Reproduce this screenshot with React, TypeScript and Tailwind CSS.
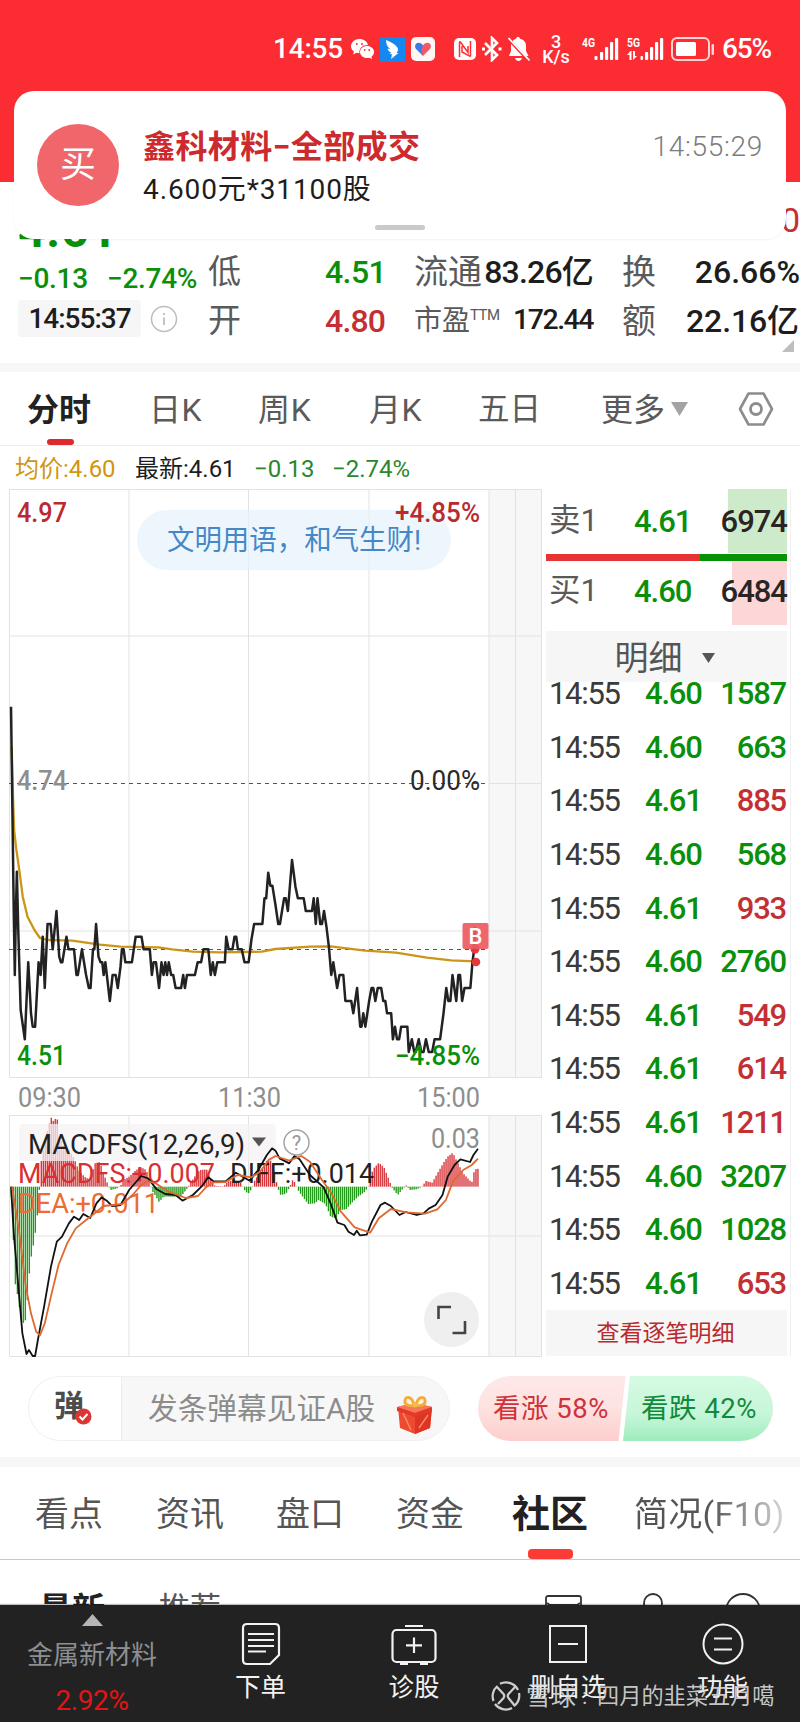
import React from "react";

const GREEN = "text-[#0a8f0a]";
const RED = "text-[#c42f33]";

const PRICE =
  "32,-220 40,400 43,585 46,400 49,275 53,450 60,690 72,778 82,547 90,700 95,740 102,740 112,547 118,585 124,470 130,624 138,432 147,432 153,508 164,393 172,530 177,547 181,547 193,470 199,508 215,508 222,585 226,585 238,508 250,585 258,624 263,624 270,508 274,508 279,432 286,530 292,547 297,547 301,585 306,547 319,663 327,585 336,585 342,624 350,560 354,508 359,508 364,547 383,547 394,470 411,470 417,508 435,508 441,585 446,547 453,547 462,624 469,547 475,585 480,547 485,585 490,547 497,585 503,585 510,624 526,624 532,585 537,624 543,585 566,585 574,547 584,547 591,508 605,508 612,585 618,547 624,585 631,547 653,547 657,470 664,508 675,508 681,470 686,470 691,508 702,508 710,547 722,547 730,480 738,432 762,432 768,355 773,355 779,278 785,317 791,317 800,375 808,432 813,432 819,393 825,355 830,355 836,393 848,240 858,320 865,355 882,355 888,393 906,393 911,355 917,432 922,355 930,432 935,432 941,393 948,440 955,500 962,585 968,547 979,624 986,585 997,585 1003,663 1020,663 1026,700 1037,624 1046,740 1050,740 1055,700 1061,740 1072,663 1079,624 1084,624 1090,663 1097,624 1107,624 1113,663 1119,663 1124,700 1136,700 1141,778 1147,740 1153,778 1159,778 1165,740 1183,740 1187,816 1196,778 1203,816 1207,816 1216,778 1223,816 1230,816 1237,778 1245,816 1255,816 1262,778 1278,778 1288,700 1296,624 1302,663 1308,663 1314,585 1325,663 1331,585 1336,585 1342,663 1349,624 1366,624 1372,547 1377,508 1380,440";

const AVERAGE =
  "34,-100 38,60 41,150 47,205 56,270 66,350 80,410 100,450 116,474 140,480 210,482 250,488 290,494 350,500 460,502 500,508 560,515 640,517 760,515 800,507 900,500 960,499 1060,512 1150,518 1240,533 1310,541 1380,544";

const DIFF =
  "32,320 40,460 55,640 65,760 77,822 84,810 95,828 102,828 110,780 128,680 148,560 165,485 180,470 200,430 215,410 230,420 242,402 262,414 280,370 295,352 310,362 325,378 350,375 375,330 410,288 430,295 455,328 480,342 510,345 530,362 560,345 585,320 605,292 620,304 655,304 685,278 725,302 750,270 775,225 790,205 800,212 812,235 840,250 855,228 870,238 900,285 940,322 960,370 980,428 1000,435 1012,455 1028,465 1036,452 1045,466 1065,464 1080,425 1105,375 1118,368 1135,378 1160,405 1178,396 1210,405 1230,400 1245,386 1265,375 1285,345 1300,290 1320,255 1337,238 1365,246 1375,225 1388,206";

const DEA =
  "35,320 55,450 75,620 90,700 105,755 116,766 130,730 150,640 170,555 195,490 220,445 250,420 275,400 300,378 330,375 355,372 385,345 410,315 430,303 455,312 490,335 540,354 575,348 600,320 620,307 655,306 690,285 730,292 755,275 780,240 800,228 840,242 875,228 900,245 935,300 960,335 990,395 1030,442 1075,458 1100,415 1135,387 1180,397 1235,401 1270,388 1295,360 1315,305 1345,270 1370,255 1388,236";

const HIST: [number, number][] = [
  [32, 330], [38, 460], [44, 610], [50, 640], [56, 680], [62, 720], [72, 735], [78, 680], [84, 590], [92, 520], [100, 480], [108, 410],
  [113, 340], [117, 300], [120, 240], [126, 210], [138, 150], [148, 112], [156, 125], [165, 108], [172, 170], [185, 200], [200, 210], [215, 235],
  [228, 270], [245, 290], [262, 300], [275, 250], [290, 246], [300, 280], [312, 310], [316, 321], [322, 330], [340, 325], [350, 318],
  [358, 300], [375, 290], [395, 270], [410, 262], [425, 270], [436, 310], [440, 330], [450, 345], [462, 366], [475, 350], [500, 350],
  [525, 350], [540, 330], [548, 318], [565, 290], [580, 270], [600, 268], [612, 300], [625, 318], [650, 319], [660, 305], [680, 300],
  [700, 308], [706, 325], [720, 342], [732, 325], [740, 300], [760, 270], [775, 240], [785, 230], [800, 285], [805, 320], [815, 345],
  [830, 342], [842, 320], [848, 300], [858, 308], [862, 325], [875, 345], [895, 372], [915, 370], [925, 360], [945, 372], [960, 410],
  [975, 415], [990, 390], [1005, 388], [1020, 370], [1040, 350], [1060, 335], [1070, 318], [1075, 290], [1085, 265], [1100, 248],
  [1115, 262], [1130, 300], [1138, 322], [1155, 345], [1170, 326], [1180, 316], [1190, 330], [1210, 328], [1225, 320], [1237, 303],
  [1255, 308], [1270, 280], [1290, 245], [1300, 230], [1315, 218], [1325, 240], [1345, 280], [1370, 308], [1378, 268], [1391, 266],
];

function histAt(x: number) {
  for (let i = 1; i < HIST.length; i++) {
    const [x0, y0] = HIST[i - 1];
    const [x1, y1] = HIST[i];
    if (x <= x1) return y0 + ((y1 - y0) * (x - x0)) / (x1 - x0);
  }
  return 320;
}

const BARS = Array.from({ length: 235 }, (_, i) => {
  const x = 33 + i * 5.79;
  return { x, y: histAt(x) };
});

function Label({ x, y, w, fill, children, size = 27, weight = 400 }: { x: number; y: number; w: number; fill: string; children: string; size?: number; weight?: number }) {
  return (
    <text x={x} y={y} fontSize={size} fontWeight={weight} fill={fill} textLength={w} lengthAdjust="spacingAndGlyphs">
      {children}
    </text>
  );
}

function Chart() {
  return (
    <svg width="542" height="869" viewBox="0 489 542 869" className="block shrink-0">
      <rect x="489" y="489" width="53" height="588" fill="#f7f7f7" />
      <rect x="489" y="1115" width="53" height="241" fill="#f7f7f7" />
      <g stroke="#e2e2e2" strokeWidth="1" fill="none">
        <path d="M9.5 489.5H542M9.5 636H542M489 783.5H542M9.5 931H542M9.5 1077.5H542M9.5 489V1077M129 489V1077M248.5 489V1077M369 489V1077M489 489V1077M515.5 489V1077M541.5 489V1077" />
        <path d="M9.5 1115.5H542M9.5 1236H542M9.5 1356.5H542M9.5 1115V1356M129 1115V1356M248.5 1115V1356M369 1115V1356M489 1115V1356M515.5 1115V1356M541.5 1115V1356" />
      </g>
      <rect x="137" y="510" width="314" height="60" rx="30" fill="#e6f1fc" fillOpacity="0.68" />
      <path d="M9 783.5H489M9 949.5H489" stroke="#555" strokeWidth="1" strokeDasharray="4 4" />
      <Label x={17} y={522} w={50} fill="#b92a2f" weight={500}>4.97</Label>
      <Label x={395} y={522} w={85} fill="#b92a2f" weight={500}>+4.85%</Label>
      <Label x={167} y={550} w={254} fill="#4488c8" size={28}>文明用语，和气生财!</Label>
      <Label x={17} y={790} w={50} fill="#8e8e8e" weight={500}>4.74</Label>
      <Label x={410} y={790} w={70} fill="#2a2a2a">0.00%</Label>

      <g transform="translate(0 780) scale(0.34435 0.33333)" fill="none" strokeLinejoin="round">
        <polyline points={AVERAGE} stroke="#cb9518" strokeWidth="2.3" vectorEffect="non-scaling-stroke" />
        <polyline points={PRICE} stroke="#222" strokeWidth="2.5" vectorEffect="non-scaling-stroke" />
      </g>
      <circle cx="476" cy="962" r="4.300" fill="#e5393f" />
      <circle cx="475" cy="949" r="4.500" fill="#e5393f" />
      <rect x="462.500" y="923" width="26" height="26" rx="2" fill="#ec5a60" fillOpacity="0.92" />
      <text x="475.500" y="944" fontSize="22" fontWeight="500" fill="#fff" textAnchor="middle">B</text>
      <Label x={17} y={1065} w={49} fill="#0a8f0a" weight={500}>4.51</Label>
      <Label x={395} y={1065} w={85} fill="#0a8f0a" weight={500}>−4.85%</Label>

      <Label x={18} y={1107} w={63} fill="#8e8e8e">09:30</Label>
      <Label x={218} y={1107} w={63} fill="#8e8e8e">11:30</Label>
      <Label x={417} y={1107} w={63} fill="#8e8e8e">15:00</Label>

      <g transform="translate(0 1080) scale(0.34435 0.33333)">
        {BARS.map((b, i) => (
          <rect
            key={i}
            x={b.x - 1.9}
            y={Math.min(320, b.y)}
            width={4}
            height={Math.max(1, Math.abs(b.y - 320))}
            fill={b.y > 320 ? "#24991c" : "#d63438"}
          />
        ))}
      </g>
      <rect x="19" y="1124" width="257" height="37" rx="4" fill="#f5f1f4" fillOpacity="0.75" />
      <Label x={28} y={1154} w={217} fill="#222" size={27.5}>MACDFS(12,26,9)</Label>
      <path d="M252 1137.500H266L259 1146.500Z" fill="#555" />
      <Label x={431} y={1148} w={49} fill="#8e8e8e">0.03</Label>
      <Label x={18} y={1183} w={197} fill="#d92f33" size={28}>MACDFS:+0.007</Label>
      <Label x={230} y={1183} w={144} fill="#222" size={28}>DIFF:+0.014</Label>
      <Label x={18} y={1213} w={141} fill="#ec6c33" size={28}>DEA:+0.011</Label>
      <g transform="translate(0 1080) scale(0.34435 0.33333)" fill="none" strokeLinejoin="round">
        <polyline points={DIFF} stroke="#111" strokeWidth="1.8" vectorEffect="non-scaling-stroke" />
        <polyline points={DEA} stroke="#e0682f" strokeWidth="1.8" vectorEffect="non-scaling-stroke" />
      </g>
      <circle cx="296.500" cy="1142.500" r="12.500" fill="#fff" fillOpacity="0.6" stroke="#a2a2a2" strokeWidth="1.500" />
      <text x="296.500" y="1149.500" fontSize="20" fill="#999" textAnchor="middle">?</text>
      <circle cx="451.500" cy="1319.500" r="27.500" fill="#efefef" />
      <path d="M438.500 1319V1307H451M452.500 1333H465V1321" fill="none" stroke="#444" strokeWidth="2.600" />
    </svg>
  );
}

const TRADES: [string, string, string][] = [
  ["4.60", "1587", "g"],
  ["4.60", "663", "g"],
  ["4.61", "885", "r"],
  ["4.60", "568", "g"],
  ["4.61", "933", "r"],
  ["4.60", "2760", "g"],
  ["4.61", "549", "r"],
  ["4.61", "614", "r"],
  ["4.61", "1211", "r"],
  ["4.60", "3207", "g"],
  ["4.60", "1028", "g"],
  ["4.61", "653", "r"],
];

function OrderPanel() {
  return (
    <div className="ml-[2px] flex h-[868px] w-[247px] flex-col border-r border-[#f0f0f0] pr-[3px] pl-[2px]">
      <div className="flex h-16 items-center pl-[3px] text-[31px]">
        <span className="w-[85px] text-[31.500px] text-[#5a5a5a]">卖1</span>
        <span className={`${GREEN} flex-1 font-medium tracking-[-1px]`}>4.61</span>
        <span className="flex h-16 w-[59px] items-center justify-end bg-[#cdebcb] font-medium tracking-[-1px] text-[#2a2422]">6974</span>
      </div>
      <div className="mt-[1px] flex h-[7px]">
        <div className="h-full w-[154px] bg-[#e63435]" />
        <div className="h-full flex-1 bg-[#059205]" />
      </div>
      <div className="flex h-16 items-center pl-[3px] text-[31px]">
        <span className="w-[85px] pb-1 text-[31.500px] text-[#5a5a5a]">买1</span>
        <span className={`${GREEN} flex-1 pb-1 font-medium tracking-[-1px]`}>4.60</span>
        <span className="flex h-16 w-[55px] items-center justify-end bg-[#fdd6d8] pb-1 font-medium tracking-[-1px] text-[#2a2422]">6484</span>
      </div>
      <div className="mt-[6px] flex h-[51px] shrink-0 items-center justify-center gap-[19px] bg-[#f6f6f6] pt-[2px] pr-[4px] text-[34px] text-[#555]">
        <span>明细</span>
        <svg width="13" height="10" viewBox="0 0 13 10"><path d="M0 0H13L6.500 10Z" fill="#555" /></svg>
      </div>
      <div className="h-[628px] shrink-0 overflow-hidden">
        <div className="-mt-[15px]">
          {TRADES.map(([price, qty, side], i) => (
            <div key={i} className="flex h-[53.600px] items-center pr-[1px] pl-[3px] text-[31px] font-medium">
              <span className="w-[96px] font-normal tracking-[-1.300px] text-[#3a3a3a]">14:55</span>
              <span className={`${GREEN} tracking-[-1.200px]`}>{price}</span>
              <span className={`${side === "g" ? GREEN : RED} ml-auto tracking-[-1.200px]`}>{qty}</span>
            </div>
          ))}
        </div>
      </div>
      <div className="flex h-[46px] shrink-0 items-center justify-center bg-[#f6f6f6] pr-[2px] text-[23px] text-[#b92a2f]">查看逐笔明细</div>
    </div>
  );
}

function Signal({ tag, data }: { tag: string; data?: boolean }) {
  return (
    <svg width="37" height="28" viewBox="0 0 37 28">
      <text x="0" y="12" fontSize="12" fontWeight="700" fill="#fff" textLength="13" lengthAdjust="spacingAndGlyphs">{tag}</text>
      <g fill="#fff">
        {!data && <rect x="12.500" y="21" width="3" height="4" rx="1" />}
        {data && <path d="M3.500 16L0 20H2.500V25H4.500V16ZM6 16V25L10 21H8V16Z" />}
        {data && <rect x="13.500" y="21" width="2.500" height="4" rx="1" />}
        <rect x="18" y="17" width="3.200" height="8" rx="1" />
        <rect x="23" y="12" width="3.200" height="13" rx="1" />
        <rect x="28" y="7" width="3.200" height="18" rx="1" />
        <rect x="33" y="3" width="3.200" height="22" rx="1" />
      </g>
    </svg>
  );
}

function StatusBar() {
  return (
    <div className="flex h-[98px] items-center pl-[273px] text-[28px] text-white">
      <span className="w-[78px] font-medium tracking-[-0.2px]">14:55</span>
      <svg width="23" height="20" viewBox="0 0 23 20" className="shrink-0">
        <path d="M8.500 0C3.800 0 0 3.200 0 7.200c0 2.200 1.200 4.100 3 5.400l-.8 2.800 3.200-1.600c1 .3 2 .4 3 .4C7.800 9 12 5.700 17 6 16.300 2.500 12.700 0 8.500 0Z" fill="#fff" />
        <path d="M23 13c0-3.500-3.200-6-7-6s-7 2.600-7 6c0 3.300 3.200 6 7 6 .8 0 1.600-.1 2.300-.3l2.700 1.300-.6-2.300C22 16.600 23 15 23 13Z" fill="#fff" />
        <g fill="#fb2d33"><circle cx="5.800" cy="5" r="1" /><circle cx="11" cy="5" r="1" /><circle cx="13.700" cy="11" r=".9" /><circle cx="18.200" cy="11" r=".9" /></g>
      </svg>
      <svg width="25" height="25" viewBox="0 0 25 25" className="ml-[6px] shrink-0">
        <rect width="25" height="25" fill="#1787f0" />
        <path d="M6 3c5 2 11 5 12 9 .2 1.500-.7 3-1.500 4h2L11 22l1-4.500-2.500-1 2-.7C8.500 14.500 8 13 7.500 11.500l3 .8C7 9.500 6 6.500 6 3Z" fill="#fff" />
      </svg>
      <svg width="24" height="24" viewBox="0 0 24 24" className="ml-[6px] shrink-0">
        <rect width="24" height="24" rx="5" fill="#fff6f6" />
        <path d="M12 19 5.500 12.500C3 10 4 6 7.500 5.800c2 0 3.500 1 4.500 2.700Z" fill="#3b7be8" />
        <path d="M12 19l6.500-6.500C21 10 20 6 16.500 5.800c-2 0-3.500 1-4.500 2.700-2 3.500-2 7 0 10.500Z" fill="#ee5a66" />
      </svg>
      <svg width="22" height="24" viewBox="0 0 22 24" className="ml-[19px] shrink-0">
        <rect y="1" width="22" height="22" rx="5" fill="#fff" />
        <path d="M5.500 20V5.500Q5.500 4 6.800 5.500L14 15.500V9M8 9V15L15.200 18.800Q16.500 20 16.500 18.500V4" fill="none" stroke="#fb2d33" strokeWidth="1.500" />
      </svg>
      <svg width="20" height="26" viewBox="0 0 20 26" className="ml-[6px] shrink-0" fill="none" stroke="#fff" strokeWidth="2.600">
        <path d="M3 7l12 12-5 5V2l5 5L3 19" />
        <path d="M0 13h3M16.500 13h3" strokeWidth="2.800" />
      </svg>
      <svg width="23" height="26" viewBox="0 0 23 26" className="ml-[5px] shrink-0">
        <path d="M11 1c1 0 1.800.7 2 1.700 4 .8 6 3.800 6 7.300v5l2.500 5H2l2-5v-5c0-3.500 2-6.500 5-7.300C9.200 1.700 10 1 11 1ZM8 22h7c-.5 2-2 3-3.500 3S8.500 24 8 22Z" fill="#fff" />
        <path d="M0 1.500 21 24" stroke="#fb2d33" strokeWidth="3" />
        <path d="M1.500 2 22.500 24.500" stroke="#fff" strokeWidth="1.800" />
      </svg>
      <div className="ml-[11px] flex w-[30px] flex-col items-center text-[18px] leading-[15px] font-medium">
        <span>3</span>
        <span>K/s</span>
      </div>
      <div className="ml-[11px]"><Signal tag="4G" /></div>
      <div className="ml-[8px]"><Signal tag="5G" data /></div>
      <svg width="45" height="25" viewBox="0 0 45 25" className="ml-[7px] shrink-0">
        <rect x="1" y="1" width="37" height="22" rx="5" fill="none" stroke="#ffd5d5" strokeWidth="2" />
        <rect x="5" y="5" width="20" height="14" rx="1.500" fill="#fff" />
        <rect x="40.500" y="7" width="2.500" height="11" rx="1" fill="#ffd5d5" />
      </svg>
      <span className="ml-[6px] font-medium tracking-[-1.200px]">65%</span>
    </div>
  );
}

function TradeToast() {
  return (
    <div className="absolute top-[91px] left-[14px] flex h-[148px] w-[772px] flex-col rounded-[20px] bg-white shadow-[0_1px_2px_rgba(0,0,0,0.05)]">
      <div className="flex flex-1 pt-[33px] pr-[23px] pl-[23px]">
        <div className="flex size-[82px] shrink-0 items-center justify-center rounded-full bg-[#f1666a] text-[36px] text-white">买</div>
        <div className="ml-[24px] flex flex-col pt-[7px]">
          <span className="text-[32px] font-bold tracking-[0.4px] text-[#cc2a2e]">鑫科材料−全部成交</span>
          <span className="mt-[13px] text-[28px] tracking-[0.9px] text-[#1d1d1d]">4.600元*31100股</span>
        </div>
        <span className="mt-[9px] ml-auto text-[28px] font-light tracking-[0.7px] text-[#7c7c7c]">14:55:29</span>
      </div>
      <div className="mb-[9px] h-[5px] w-[50px] self-center rounded-full bg-[#c9c9c9]" />
    </div>
  );
}

const QUOTE_ROW = "grid h-[49px] grid-cols-[117px_89px_179px_29px_178px] items-center text-[32px] whitespace-nowrap";

function Quote() {
  return (
    <div className="flex h-[181px] overflow-hidden pt-[16px]">
      <div className="flex w-[208px] shrink-0 flex-col pl-[18px]">
        <span className={`${GREEN} mt-[9px] text-[48px] font-bold tracking-[0.800px]`}>4.61</span>
        <div className={`${GREEN} mt-[10px] flex text-[28px] font-medium tracking-[-0.3px]`}>
          <span className="w-[89px]">−0.13</span>
          <span>−2.74%</span>
        </div>
        <div className="mt-[7px] flex items-center">
          <span className="flex h-[37px] w-[123px] items-center justify-center rounded-[4px] bg-[#f6f6f6] text-[28px] font-medium tracking-[-1px] text-[#1d1d1d]">14:55:37</span>
          <svg width="28" height="28" viewBox="0 0 28 28" className="ml-[9px]">
            <circle cx="14" cy="14" r="12.500" fill="none" stroke="#bdbdbd" strokeWidth="1.500" />
            <path d="M14 12.500V20M14 8V10" stroke="#bdbdbd" strokeWidth="1.800" />
          </svg>
        </div>
      </div>
      <div className="w-[592px] shrink-0 text-[#1d1d1d]">
        <div className={QUOTE_ROW}>
          <span className={`${RED} relative -top-[3px] col-span-5 text-right text-[34px]`}>0</span>
        </div>
        <div className={QUOTE_ROW}>
          <span className="text-[33px] text-[#5a5a5a]">低</span>
          <span className={`${GREEN} font-medium tracking-[-0.6px]`}>4.51</span>
          <span className="flex items-center justify-between"><span className="text-[34px] text-[#5a5a5a]">流通</span><span className="font-medium tracking-[-0.8px]">83.26亿</span></span>
          <span />
          <span className="flex items-center justify-between"><span className="text-[34px] text-[#5a5a5a]">换</span><span className="font-medium">26.66%</span></span>
        </div>
        <div className={QUOTE_ROW}>
          <span className="text-[33px] text-[#5a5a5a]">开</span>
          <span className={`${RED} font-medium tracking-[-0.8px]`}>4.80</span>
          <span className="flex items-center justify-between"><span className="flex text-[28px] text-[#5a5a5a]">市盈<span className="pt-[1px] text-[15px] tracking-[-0.5px]">TTM</span></span><span className="text-[28.500px] font-medium tracking-[-1.500px]">172.44</span></span>
          <span />
          <span className="flex items-center justify-between pr-[1px]"><span className="text-[34px] text-[#5a5a5a]">额</span><span className="font-medium tracking-[-0.1px]">22.16亿</span></span>
        </div>
        <svg width="12" height="12" viewBox="0 0 12 12" className="-mt-[5px] ml-[574px]"><path d="M12 0V12H0Z" fill="#bdbdbd" /></svg>
      </div>
    </div>
  );
}

function PeriodTabs() {
  return (
    <div className="flex h-[74px] border-b border-[#ececec] pl-[27px] text-[32px] text-[#5a5a5a]">
      <div className="flex w-[122px] flex-col pt-[22px]">
        <span className="font-bold text-[#222]">分时</span>
        <span className="mt-[13px] ml-[20px] h-[7px] w-[27px] rounded-full bg-[#dc2b2f]" />
      </div>
      <span className="w-[109px] pt-[22px] tracking-[0.5px]">日K</span>
      <span className="w-[111px] pt-[22px] tracking-[0.8px]">周K</span>
      <span className="w-[109px] pt-[22px] tracking-[0.5px]">月K</span>
      <span className="w-[123px] pt-[22px] text-[31.500px]">五日</span>
      <span className="flex w-[137px] pt-[22px]">
        更多
        <svg width="17" height="14" viewBox="0 0 17 14" className="mt-[8px] ml-[6px]"><path d="M0 0H17L8.500 14Z" fill="#a3a3a3" /></svg>
      </span>
      <svg width="36" height="34" viewBox="0 0 36 34" className="mt-[20px]" fill="none" stroke="#8c8c8c">
        <path d="M10.500 1.500H25.500L34 17 25.500 32.500H10.500L2 17Z" strokeWidth="2.600" strokeLinejoin="round" />
        <circle cx="18" cy="17" r="5.500" strokeWidth="2.800" />
      </svg>
    </div>
  );
}

function Gift() {
  return (
    <svg width="36" height="40" viewBox="0 0 36 40">
      <path d="M1 12 18 8 35 12 33 33 18 39 3 33Z" fill="#ee4a32" />
      <path d="M18 18V39L33 33 35 13Z" fill="#dd3424" />
      <path d="M0 12 17 7.500 35 12 18 18Z" fill="#f8765a" />
      <path d="M0 12 18 18 35 12V16L18 22 0 16Z" fill="#e23a28" />
      <path d="M22 33 31 20M6 18 14 35" stroke="#f98a63" strokeWidth="1.500" />
      <path d="M17 10C11 12 7 9 8 5s7-4 9 5ZM19 10c6 2 10-1 9-5s-7-4-9 5Z" fill="#fff3cf" stroke="#f3ac3c" strokeWidth="2.800" />
      <circle cx="18" cy="10" r="2.500" fill="#f7bb4c" />
    </svg>
  );
}

function Barrage() {
  return (
    <div className="flex h-[99px] items-start pt-[18px] pl-[28px]">
      <div className="flex h-[65px] w-[422px] overflow-hidden rounded-full border border-[#f0f0f0] bg-[#f7f7f7]">
        <div className="relative flex w-[93px] items-center border-r border-[#ebebeb] bg-white pb-1.5 pl-[25px] text-[30px] font-bold text-[#4c4c4c]">
          弹
          <svg width="17" height="17" viewBox="0 0 17 17" className="absolute top-[31px] left-[46px]">
            <circle cx="8.500" cy="8.500" r="8" fill="#de3533" />
            <path d="M4.500 8.500 7.500 11.500 12.500 6" fill="none" stroke="#fff" strokeWidth="2" />
          </svg>
        </div>
        <span className="flex w-[275px] items-center pt-[1px] pl-[26px] text-[29.700px] text-[#8c8c8c]">发条弹幕见证A股</span>
        <div className="pt-[18px]"><Gift /></div>
      </div>
      <div className="relative ml-[28px] flex h-[65px] w-[295px] overflow-hidden rounded-full bg-linear-to-b from-[#fde9e9] via-[#fde2e1] to-[#fccecb]">
        <svg width="156" height="65" viewBox="0 0 156 65" className="absolute top-0 right-0">
          <defs>
            <linearGradient id="fall" x1="0" y1="0" x2="0" y2="1">
              <stop offset="0" stopColor="#d5fae3" />
              <stop offset="0.6" stopColor="#c6f6d9" />
              <stop offset="1" stopColor="#9eecbd" />
            </linearGradient>
          </defs>
          <path d="M8.500 0H156V65H1.500Z" fill="#fff" />
          <path d="M13 0H156V65H6Z" fill="url(#fall)" />
        </svg>
        <span className="relative flex w-[147px] items-center pl-[15px] text-[27.500px] tracking-[0.5px] whitespace-nowrap text-[#cf3238]">看涨 58%</span>
        <span className="relative flex items-center pl-[16px] text-[27.500px] tracking-[0.5px] whitespace-nowrap text-[#128a3c]">看跌 42%</span>
      </div>
    </div>
  );
}

function SectionTabs() {
  return (
    <div className="flex h-[93px] border-b border-[#c8c8c8] pl-[35px] text-[34px] whitespace-nowrap text-[#555]">
      <span className="w-[121px] pt-[30px]">看点</span>
      <span className="w-[120px] pt-[30px]">资讯</span>
      <span className="w-[120px] pt-[30px]">盘口</span>
      <span className="w-[116px] pt-[30px]">资金</span>
      <div className="flex w-[122px] flex-col pt-[28px]">
        <span className="text-[38px] font-bold text-[#222]">社区</span>
        <span className="mt-[16px] ml-[16px] h-[10px] w-[45px] rounded-[4px] bg-[#fb3b35]" />
      </div>
      <span className="h-[80px] bg-linear-to-r from-[#555] from-50% to-[#d8d8d8] bg-clip-text pt-[30px] tracking-[0.3px] text-transparent">简况(F10)</span>
    </div>
  );
}

function FeedTabs() {
  return (
    <div className="flex h-[45px] items-start overflow-hidden pt-[33px] pl-[39px] text-[33px]">
      <span className="w-[120px] font-bold text-[#222]">最新</span>
      <span className="w-[386px] text-[31px] text-[#555]">推荐</span>
      <svg width="38" height="20" viewBox="0 0 38 20" className="mt-[2px]" fill="none" stroke="#333" strokeWidth="1.800">
        <rect x="1" y="1" width="35" height="22" rx="2" />
        <path d="M2 8 5 10H32L35 8" />
      </svg>
      <svg width="20" height="20" viewBox="0 0 20 20" className="ml-[60px]" fill="none" stroke="#333" strokeWidth="1.800">
        <circle cx="10" cy="10" r="9" />
      </svg>
      <svg width="36" height="30" viewBox="0 0 36 30" className="ml-[62px]" fill="none" stroke="#333" strokeWidth="1.800">
        <circle cx="18" cy="18" r="17" />
      </svg>
    </div>
  );
}

const NAV = "flex flex-col items-center pr-[1px] text-[25.500px]";

function BottomNav() {
  return (
    <div className="relative flex h-[117px] bg-[#222] text-[#f2f2f2] shadow-[0_-1px_1px_rgba(0,0,0,0.25)]">
      <div className="flex w-[184px] flex-col items-center pt-[9px]">
        <svg width="21" height="12" viewBox="0 0 21 12"><path d="M10.500 0 21 12H0Z" fill="#b5b5b5" /></svg>
        <span className="mt-[16px] text-[26px] text-[#8d8f93]">金属新材料</span>
        <span className="mt-[19px] text-[28px] tracking-[-0.4px] text-[#e21512]">2.92%</span>
      </div>
      <div className={`${NAV} w-[154px]`}>
        <svg width="40" height="44" viewBox="0 0 40 44" className="mt-[17px]" fill="none" stroke="#f2f2f2" strokeWidth="2.200">
          <path d="M6 2H34Q38 2 38 6V33L29 42H6Q2 42 2 38V6Q2 2 6 2Z" />
          <path d="M7 12H33M7 18H33M7 24H33M7 29.500H25" />
        </svg>
        <span className="mt-[9px]">下单</span>
      </div>
      <div className={`${NAV} w-[153px]`}>
        <svg width="46" height="44" viewBox="0 0 46 44" className="mt-[17px]" fill="none" stroke="#f2f2f2" strokeWidth="2.200">
          <rect x="1.500" y="8" width="43" height="32" rx="4" />
          <path d="M14 4H32M23 15.500V31M15 23.300H31M9 42H17M29 42H37" />
        </svg>
        <span className="mt-[9px]">诊股</span>
      </div>
      <div className={`${NAV} w-[155px]`}>
        <svg width="38" height="38" viewBox="0 0 38 38" className="mt-[20px]" fill="none" stroke="#f2f2f2" strokeWidth="2">
          <rect x="1" y="1" width="36" height="36" />
          <path d="M9 19H29" />
        </svg>
        <span className="mt-[12px]">删自选</span>
      </div>
      <div className={`${NAV} w-[154px]`}>
        <svg width="42" height="42" viewBox="0 0 42 42" className="mt-[18px]" fill="none" stroke="#f2f2f2" strokeWidth="2">
          <circle cx="21" cy="21" r="19.500" />
          <path d="M12 15.500H30M12 26.500H30" />
        </svg>
        <span className="mt-[10px]">功能</span>
      </div>
      <div className="absolute top-[76px] left-[491px] flex h-[30px] items-center text-[22.200px] text-[#dcdcdc]/90">
        <svg width="30" height="30" viewBox="0 0 30 30" fill="none" stroke="#cfcfcf" strokeWidth="2.200">
          <path d="M9 2.800A13.300 13.300 0 0 1 27 9M28 12A13.300 13.300 0 0 1 23 25M21 27A13.300 13.300 0 0 1 4 23M2.500 20A13.300 13.300 0 0 1 6.500 5" />
          <path d="M6 6 12.500 13Q14 15 12.500 17L7 23M24 6 17.500 13Q16 15 17.500 17L24 25" />
        </svg>
        <span className="ml-[5px] text-[25px]">雪球</span>
        <span className="w-[21px] pl-[6px]">:</span>
        <span>四月的韭菜五月噶</span>
      </div>
    </div>
  );
}

export default function App() {
  return (
    <div className="relative h-[1722px] w-[800px] overflow-hidden bg-white font-['Roboto','Noto_Sans_CJK_SC',sans-serif] leading-none">
      <div className="h-[182px] bg-[#fb2d33]">
        <StatusBar />
      </div>
      <Quote />
      <div className="h-[9px] bg-[#f7f7f7]" />
      <PeriodTabs />
      <div className="flex h-[43px] items-center pt-[3px] pl-[15px] text-[24px] text-[#1d1d1d]">
        <span className="w-[120px] text-[#d0960f]">均价:4.60</span>
        <span className="w-[119px]">最新:4.61</span>
        <span className="w-[78px] text-[#2c862c]">−0.13</span>
        <span className="text-[#2c862c]">−2.74%</span>
      </div>
      <div className="flex h-[869px]">
        <Chart />
        <OrderPanel />
      </div>
      <Barrage />
      <div className="h-[10px] bg-[#f7f7f7]" />
      <SectionTabs />
      <FeedTabs />
      <BottomNav />
      <TradeToast />
    </div>
  );
}
